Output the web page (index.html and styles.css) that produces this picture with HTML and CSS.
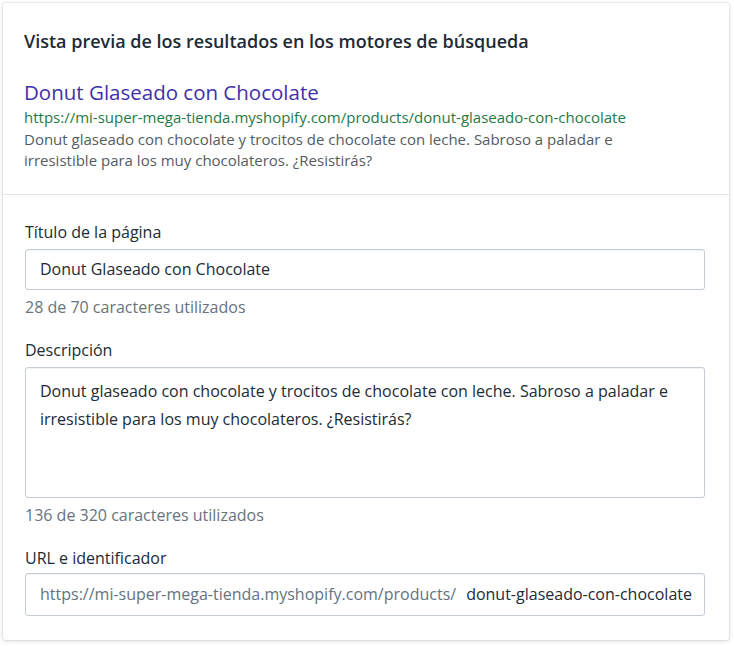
FILE: index.html
```html
<!DOCTYPE html>
<html lang="es">
<head>
<meta charset="utf-8">
<link rel="stylesheet" href="styles.css">
</head>
<body>
<div class="card">
  <section class="preview">
    <h2 class="heading">Vista previa de los resultados en los motores de búsqueda</h2>
    <div class="result">
      <div class="result-title">Donut Glaseado con Chocolate</div>
      <div class="result-url">https://mi-super-mega-tienda.myshopify.com/products/donut-glaseado-con-chocolate</div>
      <div class="result-desc">Donut glaseado con chocolate y trocitos de chocolate con leche. Sabroso a paladar e irresistible para los muy chocolateros. ¿Resistirás?</div>
    </div>
  </section>
  <section class="form">
    <div class="field">
      <div class="label">Título de la página</div>
      <div class="input">Donut Glaseado con Chocolate</div>
      <div class="help">28 de 70 caracteres utilizados</div>
    </div>
    <div class="field">
      <div class="label">Descripción</div>
      <div class="textarea">Donut glaseado con chocolate y trocitos de chocolate con leche. Sabroso a paladar e irresistible para los muy chocolateros. ¿Resistirás?</div>
      <div class="help">136 de 320 caracteres utilizados</div>
    </div>
    <div class="field">
      <div class="label label-tight">URL e identificador</div>
      <div class="input url-input"><span class="prefix">https://mi-super-mega-tienda.myshopify.com/products/</span><span class="slug">donut-glaseado-con-chocolate</span></div>
    </div>
  </section>
</div>
</body>
</html>
```

FILE: styles.css
```css
html, body {
  margin: 0;
  padding: 0;
  background: #ffffff;
}
body {
  padding: 3px 5px 6px 3px;
  font-family: "Open Sans", "Noto Sans", sans-serif;
  color: #212b36;
  font-size: 16px;
}
.card {
  background: #fff;
  border-radius: 3px;
  box-shadow: 0 0 0 1px rgba(63,63,68,0.05), 0 1px 4px rgba(63,63,68,0.2);
}
.preview {
  padding: 26px 21px 23px 21px;
  border-bottom: 1px solid #e3e6ea;
}
.heading {
  margin: 0;
  font-size: 18px;
  font-weight: 600;
  line-height: 24px;
  color: #212b36;
}
.result {
  margin-top: 26px;
}
.result-title {
  font-size: 20.5px;
  line-height: 26px;
  color: #3f31a8;
}
.result-url {
  font-size: 15px;
  line-height: 24px;
  color: #1f7a45;
}
.result-desc {
  font-size: 15px;
  line-height: 21px;
  color: #545c63;
  padding-right: 20px;
}
.form {
  padding: 26px 24px 24px 22px;
  display: flex;
  flex-direction: column;
  gap: 21px;
}
.label {
  font-size: 16px;
  line-height: 22px;
  margin-bottom: 6px;
  color: #212b36;
}
.label-tight {
  margin-bottom: 4px;
}
.input, .textarea {
  border: 1px solid #c4cdd5;
  border-radius: 3px;
  padding: 0 14px;
  font-size: 16px;
  color: #212b36;
  background: #fff;
  box-shadow: inset 0 1px 0 rgba(99,115,129,0.08);
}
.input {
  height: 39px;
  line-height: 39px;
  white-space: nowrap;
  overflow: hidden;
}
.url-input {
  height: 41px;
  line-height: 41px;
}
.textarea {
  height: 120px;
  padding-top: 9px;
  line-height: 28px;
}
.help {
  margin-top: 6px;
  font-size: 16px;
  line-height: 22px;
  color: #68737d;
}
.prefix {
  color: #637381;
}
.slug {
  margin-left: 10px;
  color: #212b36;
}
```
